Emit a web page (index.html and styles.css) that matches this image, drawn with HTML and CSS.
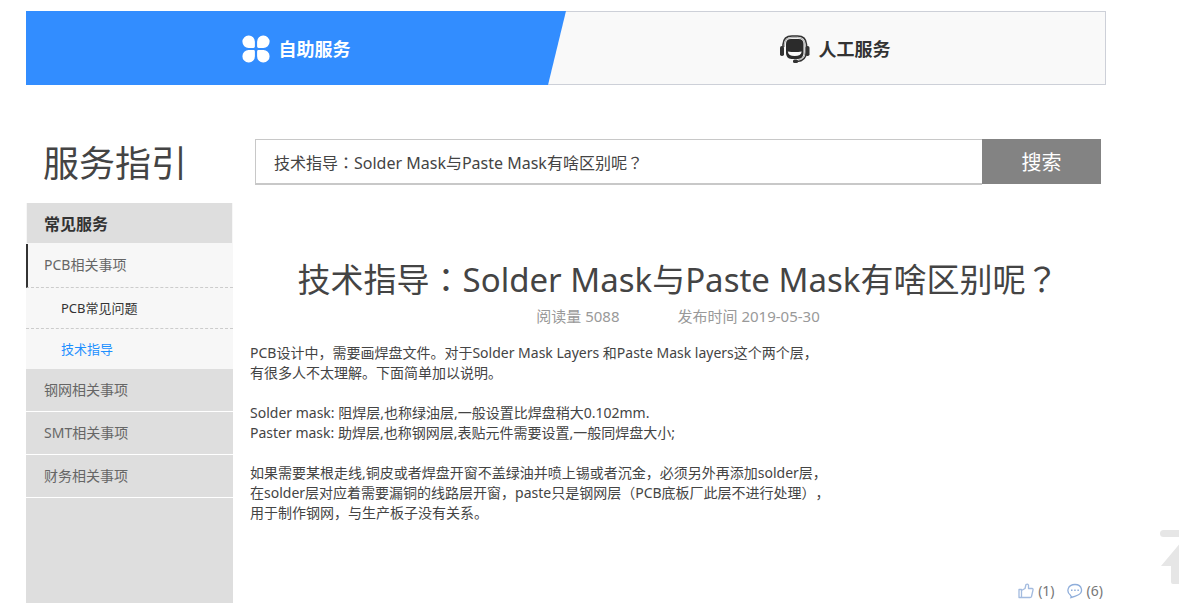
FILE: index.html
```html
<!DOCTYPE html>
<html lang="zh-CN">
<head>
    <meta charset="UTF-8">
    <meta name="viewport" content="width=device-width, initial-scale=1.0">
    <title>服务指引</title>
    <link rel="stylesheet" href="styles.css">
</head>
<body>
    <nav class="tabs">
        <a class="tab active" href="#self">
            <svg width="28" height="28" viewBox="0 0 28 28" fill="#fff">
                <path d="M6.5 0.5A6 6 0 0 1 12.9 6.7V11.5Q12.9 12.9 11.5 12.9H6.7A6.2 6.2 0 0 1 6.5 0.5Z"/>
                <path d="M21.5 0.5A6 6 0 0 0 15.1 6.7V11.5Q15.1 12.9 16.5 12.9H21.3A6.2 6.2 0 0 0 21.5 0.5Z"/>
                <path d="M6.5 27.5A6 6 0 0 0 12.9 21.3V16.5Q12.9 15.1 11.5 15.1H6.7A6.2 6.2 0 0 0 6.5 27.5Z"/>
                <path d="M21.5 27.5A6 6 0 0 1 15.1 21.3V16.5Q15.1 15.1 16.5 15.1H21.3A6.2 6.2 0 0 1 21.5 27.5Z"/>
            </svg>
            自助服务
        </a>
        <a class="tab" href="#staff">
            <svg width="30" height="28" viewBox="0 0 30 28">
                <path d="M3 12V9.5Q3.5 1 12 1H17.5Q26 1 26.5 9.5V17Q26 26 17 26.5" fill="none" stroke="#333" stroke-width="1.6"/>
                <path d="M4.500 12Q3.800 2.600 12 2.600H17.500Q25.700 2.600 25 12V17Q24.500 24.500 18 25" fill="none" stroke="#aaa" stroke-width="1"/>
                <rect x="0" y="11" width="4" height="10" rx="1.8" fill="#333"/>
                <rect x="25.5" y="11" width="4" height="10" rx="1.8" fill="#333"/>
                <path d="M6 9Q6 4 11 4H18.500Q23.500 4 23.500 9V18Q23.500 23.500 18 24H11.500Q6 23.500 6 18Z" fill="#2b2b2b"/>
                <path d="M7.800 16.500Q14.700 17.500 21.700 16.500Q21.200 21 14.700 21Q8.300 21 7.800 16.500Z" fill="#f9f9f9"/>
                <rect x="13" y="24.5" width="5" height="3.5" rx="1.5" fill="#333"/>
            </svg>
            人工服务
        </a>
    </nav>

    <div class="main">
        <aside class="sidebar">
            <h2 class="sidebar-title">服务指引</h2>
            <div class="menu">
                <h3 class="menu-head">常见服务</h3>
                <a class="menu-item open" href="#pcb">PCB相关事项</a>
                <a class="sub-item" href="#faq">PCB常见问题</a>
                <a class="sub-item current" href="#guide">技术指导</a>
                <a class="menu-item" href="#steel">钢网相关事项</a>
                <a class="menu-item" href="#smt">SMT相关事项</a>
                <a class="menu-item" href="#finance">财务相关事项</a>
            </div>
        </aside>

        <div class="content">
            <form class="search">
                <input type="text" lang="zh-TW" aria-label="搜索" value="技术指导：Solder Mask与Paste Mask有啥区别呢？">
                <button type="button">搜索</button>
            </form>

            <article class="article">
                <h1 lang="zh-TW">技术指导：Solder Mask与Paste Mask有啥区别呢？</h1>
                <div class="meta">
                    <span>阅读量 5088</span>
                    <span>发布时间 2019-05-30</span>
                </div>
                <p>PCB设计中，需要画焊盘文件。对于Solder Mask Layers 和Paste Mask layers这个两个层，<br>
                有很多人不太理解。下面简单加以说明。</p>
                <p>Solder mask: 阻焊层,也称绿油层,一般设置比焊盘稍大0.102mm.<br>
                Paster mask: 助焊层,也称钢网层,表贴元件需要设置,一般同焊盘大小;</p>
                <p>如果需要某根走线,铜皮或者焊盘开窗不盖绿油并喷上锡或者沉金，必须另外再添加solder层，<br>
                在solder层对应着需要漏铜的线路层开窗，paste只是钢网层（PCB底板厂此层不进行处理），<br>
                用于制作钢网，与生产板子没有关系。</p>
            </article>

            <div class="actions">
                <button type="button">
                    <svg width="16" height="16" viewBox="0 0 16 16" fill="none" stroke="#a3bbdf" stroke-width="1.3" stroke-linejoin="round">
                        <path d="M1 6.5H3.5V14.5H1ZM3.5 14.5V7.5L7 5.500L8 1.5Q9.5 0.5 10.5 2V5.5H14Q15.3 5.7 15 7L13.5 13.5Q13.2 14.5 12 14.5Z"/>
                    </svg>
                    (1)
                </button>
                <button type="button">
                    <svg width="16" height="16" viewBox="0 0 16 16" fill="none" stroke="#8faedb" stroke-width="1.3">
                        <path d="M3.5 12.3C-1 9 0.5 1.5 8 1.5C15.5 1.5 16.5 9.5 11 12Q8 13.5 4 14.5Q4.5 13.5 3.5 12.3Z"/>
                        <path d="M4 7.2H5.5M7.2 7.2H8.7M10.4 7.2H11.9" stroke-width="1.6"/>
                    </svg>
                    (6)
                </button>
            </div>
        </div>
    </div>

    <a class="back-top" href="#" aria-label="返回顶部">
        <svg width="54" height="56" viewBox="0 0 54 56" fill="#e6e6e6">
            <rect x="0" y="0" width="54" height="7" rx="3.5"/>
            <path d="M27 5L53 36H43V52Q43 54 41 54H13Q11 54 11 52V36H1Z"/>
        </svg>
    </a>
</body>
</html>
```
FILE: styles.css
```css
* {
    box-sizing: border-box;
}
body {
    display: flex;
    flex-direction: column;
    min-height: 100vh;
    margin: 0;
    padding: 11px 73px 0 26px;
    background-color: #fff;
    color: #444;
    font-family: "Noto Sans", "Noto Sans CJK SC", sans-serif;
    font-size: 14px;
    line-height: 20px;
    text-spacing-trim: space-all;
}
h1, h2, h3, p {
    margin: 0;
}
a {
    color: inherit;
    text-decoration: none;
}
button {
    border: none;
    padding: 0;
    font-family: inherit;
    cursor: pointer;
}

/* 顶部切换 */
.tabs {
    display: flex;
    height: 74px;
    background-color: #f9f9f9;
    box-shadow: inset 0 0 0 1px #cdd0d8;
}
.tab {
    width: 50%;
    display: flex;
    align-items: center;
    justify-content: center;
    gap: 9px;
    padding: 2px 2px 0 0;
    color: #333;
    font-size: 18px;
    font-weight: bold;
}
.tab.active {
    padding-right: 0;
    background-color: #328dff;
    color: #fff;
    clip-path: polygon(0 0, 100% 0, calc(100% - 18px) 100%, 0 100%);
}

.main {
    flex: 1;
    display: flex;
    gap: 17px;
    padding-top: 54px;
}

/* 左侧菜单 */
.sidebar {
    display: flex;
    flex-direction: column;
    width: 207px;
}
.sidebar-title {
    padding-left: 17px;
    margin-bottom: 14px;
    font-size: 36px;
    font-weight: normal;
    line-height: 50px;
}
.menu {
    flex: 1;
    background-color: #dedede;
}
.menu-head {
    height: 41px;
    padding-left: 17px;
    border: 1px solid #f7f7f7;
    border-top: none;
    color: #333;
    font-size: 16px;
    line-height: 42px;
}
.menu-item {
    display: block;
    height: 43px;
    padding-left: 18px;
    border-bottom: 1px solid #fff;
    color: #666;
    line-height: 42px;
}
.menu-item.open {
    height: 44px;
    padding-left: 16px;
    border-left: 2px solid #333;
    border-bottom: 1px dashed #ccc;
    background-color: #f7f7f7;
}
.sub-item {
    display: block;
    height: 41px;
    padding-left: 35px;
    border-bottom: 1px dashed #ccc;
    background-color: #f7f7f7;
    color: #333;
    font-size: 13px;
    line-height: 40px;
}
.sub-item.current {
    height: 40px;
    border-bottom: none;
    color: #1e90ff;
}

/* 搜索 */
.content {
    flex: 1;
}
.search {
    display: flex;
    margin: 0 5px;
}
.search input {
    flex: 1;
    height: 46px;
    padding: 0 18px;
    border: 1px solid #c8c8c8;
    border-bottom-width: 2px;
    border-right: none;
    color: #444;
    font-family: "Noto Sans", "Noto Sans CJK TC", sans-serif;
    font-size: 16px;
}
.search button {
    width: 119px;
    height: 45px;
    background-color: #838383;
    color: #fff;
    font-size: 20px;
}

/* 文章 */
.article {
    margin-top: 75px;
}
.article h1 {
    font-family: "Noto Sans", "Noto Sans CJK TC", sans-serif;
    font-size: 33px;
    font-weight: normal;
    line-height: 40px;
    text-align: center;
}
.meta {
    display: flex;
    justify-content: center;
    gap: 58px;
    margin: 6px 0 17px;
    color: #999;
    font-size: 15px;
}
.article p + p {
    margin-top: 20px;
}

.actions {
    display: flex;
    justify-content: flex-end;
    gap: 12px;
    margin-top: 58px;
    padding-right: 3px;
}
.actions button {
    display: flex;
    align-items: center;
    gap: 4px;
    background: none;
    color: #777;
    font-size: 14px;
    line-height: 20px;
}

/* 返回顶部 */
.back-top {
    position: fixed;
    right: -35px;
    bottom: 17px;
}
.back-top svg {
    display: block;
}
```
